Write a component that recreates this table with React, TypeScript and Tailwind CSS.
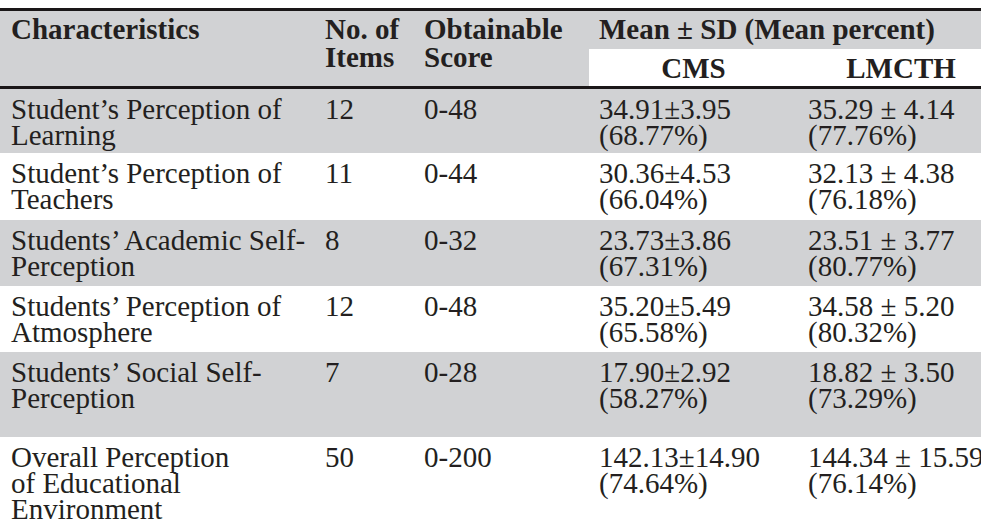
const rows = [
  { h: "h-[64px]", bg: "bg-[#d1d2d4]", name: ["Student’s Perception of", "Learning"], n: "12", score: "0-48", cms: ["34.91±3.95", "(68.77%)"], lm: ["35.29 ± 4.14", "(77.76%)"] },
  { h: "h-[67px]", bg: "bg-white", name: ["Student’s Perception of", "Teachers"], n: "11", score: "0-44", cms: ["30.36±4.53", "(66.04%)"], lm: ["32.13 ± 4.38", "(76.18%)"] },
  { h: "h-[66px]", bg: "bg-[#d1d2d4]", name: ["Students’ Academic Self-", "Perception"], n: "8", score: "0-32", cms: ["23.73±3.86", "(67.31%)"], lm: ["23.51 ± 3.77", "(80.77%)"] },
  { h: "h-[66px]", bg: "bg-white", name: ["Students’ Perception of", "Atmosphere"], n: "12", score: "0-48", cms: ["35.20±5.49", "(65.58%)"], lm: ["34.58 ± 5.20", "(80.32%)"] },
  { h: "h-[85px]", bg: "bg-[#d1d2d4]", name: ["Students’ Social Self-", "Perception"], n: "7", score: "0-28", cms: ["17.90±2.92", "(58.27%)"], lm: ["18.82 ± 3.50", "(73.29%)"] },
  { h: "h-[100px]", bg: "bg-white", name: ["Overall Perception", "of Educational", "Environment"], n: "50", score: "0-200", cms: ["142.13±14.90", "(74.64%)"], lm: ["144.34 ± 15.59", "(76.14%)"] },
];

const cols = "grid grid-cols-[315px_99px_175px_209px_206px]";

function Lines({ items }: { items: string[] }) {
  return (
    <>
      {items.map((t, i) => (
        <div key={i} className="whitespace-nowrap">{t}</div>
      ))}
    </>
  );
}

export default function App() {
  return (
    <div className="w-[981px] h-[526px] overflow-hidden bg-white text-[#231f20] font-['Liberation_Serif',serif]">
      <div className="w-[1004px] pt-[8px]">
        <div className={`${cols} grid-rows-[38px_37px] bg-[#d1d2d4] border-t-[3px] border-b-[3px] border-[#1a1718] font-bold text-[29px] leading-[28px]`}>
          <div className="row-span-2 pl-[11px] pt-[4px]">Characteristics</div>
          <div className="row-span-2 pl-[10px] pt-[4px]">No. of<br />Items</div>
          <div className="row-span-2 pl-[10px] pt-[4px]">Obtainable<br />Score</div>
          <div className="col-span-2 pl-[10px] pt-[4px] whitespace-nowrap">Mean ± SD (Mean percent)</div>
          <div className="bg-white flex items-center justify-center pt-[1px]">CMS</div>
          <div className="bg-white flex items-center justify-center pt-[1px]">LMCTH</div>
        </div>
        {rows.map((r, i) => (
          <div key={i} className={`${cols} ${r.h} ${r.bg} text-[29px] leading-[26px]`}>
            <div className="pl-[11px] pt-[7px]"><Lines items={r.name} /></div>
            <div className="pl-[10px] pt-[7px]">{r.n}</div>
            <div className="pl-[10px] pt-[7px]">{r.score}</div>
            <div className="pl-[10px] pt-[7px]"><Lines items={r.cms} /></div>
            <div className="pl-[10px] pt-[7px]"><Lines items={r.lm} /></div>
          </div>
        ))}
      </div>
    </div>
  );
}
